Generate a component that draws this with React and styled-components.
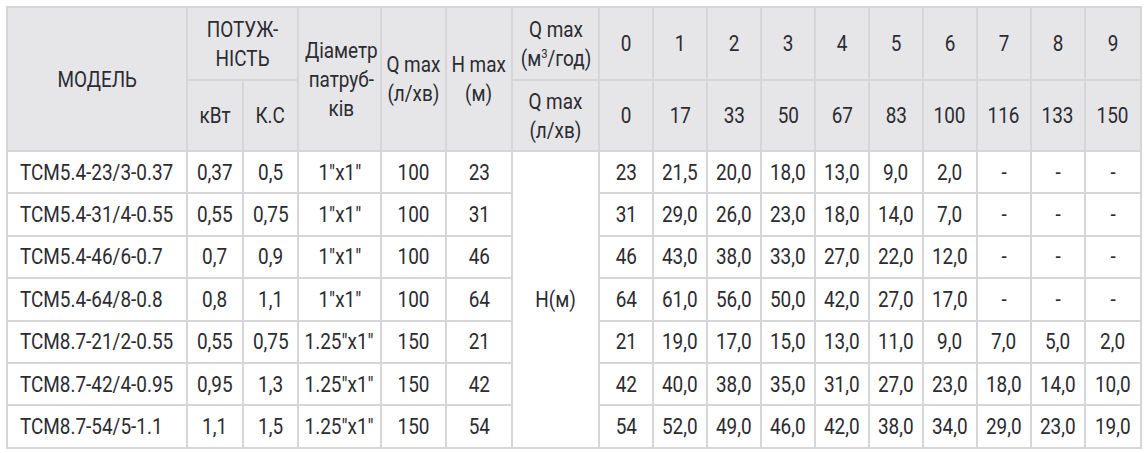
import React from 'react'
import styled, { createGlobalStyle } from 'styled-components'

const GlobalStyle = createGlobalStyle`
html, body {
  margin: 0;
  padding: 0;
  background: #fff;
}
body {
  padding: 6px;
  font-family: Roboto, "DejaVu Sans Condensed", sans-serif;
  color: #2b2b31;
}
`;

const Table = styled.table`
border-collapse: collapse;
table-layout: fixed;
width: 1134px;
font-size: 22px;
`;

const Th = styled.th`
background: #e6e6e8;
border: 2px solid #d6d6d8;
font-weight: 400;
line-height: 29px;
padding: 0;
height: ${p => p.h || 'auto'};
vertical-align: middle;
text-align: center;
white-space: nowrap;
`;

const Td = styled.td`
border: 2px solid #d6d6d8;
padding: 0;
height: 40.4px;
text-align: ${p => (p.left ? 'left' : 'center')};
padding-left: ${p => (p.left ? '12px' : '0')};
vertical-align: middle;
white-space: nowrap;
`;

// the reference uses a condensed DIN face; narrow Roboto to match
const Txt = styled.span`
display: inline-block;
transform: scaleX(0.86);
transform-origin: ${p => (p.left ? 'left center' : 'center')};
`;

const Sup = styled.sup`
font-size: 13px;
line-height: 0;
`;

const widths = [180, 56, 55, 83, 65, 66, 87, 54, 54, 54, 54, 54, 54, 54, 54, 54, 56];

const flowHead = [0, 17, 33, 50, 67, 83, 100, 116, 133, 150];

const rows = [
  ['TCM5.4-23/3-0.37', '0,37', '0,5', '1"x1"', '100', '23', ['23', '21,5', '20,0', '18,0', '13,0', '9,0', '2,0', '-', '-', '-']],
  ['TCM5.4-31/4-0.55', '0,55', '0,75', '1"x1"', '100', '31', ['31', '29,0', '26,0', '23,0', '18,0', '14,0', '7,0', '-', '-', '-']],
  ['TCM5.4-46/6-0.7', '0,7', '0,9', '1"x1"', '100', '46', ['46', '43,0', '38,0', '33,0', '27,0', '22,0', '12,0', '-', '-', '-']],
  ['TCM5.4-64/8-0.8', '0,8', '1,1', '1"x1"', '100', '64', ['64', '61,0', '56,0', '50,0', '42,0', '27,0', '17,0', '-', '-', '-']],
  ['TCM8.7-21/2-0.55', '0,55', '0,75', '1.25"x1"', '150', '21', ['21', '19,0', '17,0', '15,0', '13,0', '11,0', '9,0', '7,0', '5,0', '2,0']],
  ['TCM8.7-42/4-0.95', '0,95', '1,3', '1.25"x1"', '150', '42', ['42', '40,0', '38,0', '35,0', '31,0', '27,0', '23,0', '18,0', '14,0', '10,0']],
  ['TCM8.7-54/5-1.1', '1,1', '1,5', '1.25"x1"', '150', '54', ['54', '52,0', '49,0', '46,0', '42,0', '38,0', '34,0', '29,0', '23,0', '19,0']],
];

export default function App() {
  return (
    <>
      <GlobalStyle />
      <Table>
        <colgroup>
          {widths.map((w, i) => <col key={i} style={{ width: w }} />)}
        </colgroup>
        <thead>
          <tr>
            <Th rowSpan={2}><Txt>МОДЕЛЬ</Txt></Th>
            <Th colSpan={2} h="71px"><Txt>ПОТУЖ-<br />НІСТЬ</Txt></Th>
            <Th rowSpan={2}><Txt>Діаметр<br />патруб-<br />ків</Txt></Th>
            <Th rowSpan={2}><Txt>Q max<br />(л/хв)</Txt></Th>
            <Th rowSpan={2}><Txt>H max<br />(м)</Txt></Th>
            <Th><Txt>Q max<br />(м<Sup>3</Sup>/год)</Txt></Th>
            {flowHead.map((_, i) => <Th key={i}><Txt>{i}</Txt></Th>)}
          </tr>
          <tr>
            <Th h="69px"><Txt>кВт</Txt></Th>
            <Th><Txt>К.С</Txt></Th>
            <Th><Txt>Q max<br />(л/хв)</Txt></Th>
            {flowHead.map(v => <Th key={v}><Txt>{v}</Txt></Th>)}
          </tr>
        </thead>
        <tbody>
          {rows.map((r, ri) => (
            <tr key={r[0]}>
              <Td left><Txt left>{r[0]}</Txt></Td>
              <Td><Txt>{r[1]}</Txt></Td>
              <Td><Txt>{r[2]}</Txt></Td>
              <Td><Txt>{r[3]}</Txt></Td>
              <Td><Txt>{r[4]}</Txt></Td>
              <Td><Txt>{r[5]}</Txt></Td>
              {ri === 0 && <Td rowSpan={7}><Txt>H(м)</Txt></Td>}
              {r[6].map((v, i) => <Td key={i}><Txt>{v}</Txt></Td>)}
            </tr>
          ))}
        </tbody>
      </Table>
    </>
  )
}
